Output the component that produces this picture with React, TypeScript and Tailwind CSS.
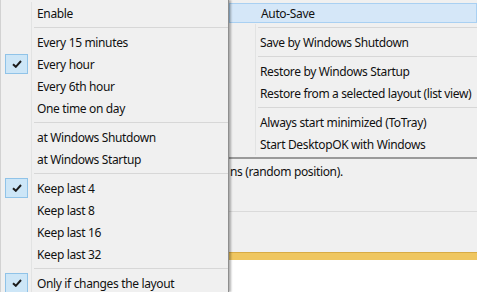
import { FunctionComponent } from "react";

type MenuEntry = { label: string; checked?: boolean; active?: boolean } | "sep";

const subMenu: MenuEntry[] = [
  { label: "Enable" },
  "sep",
  { label: "Every 15 minutes" },
  { label: "Every hour", checked: true },
  { label: "Every 6th hour" },
  { label: "One time on day" },
  "sep",
  { label: "at Windows Shutdown" },
  { label: "at Windows Startup" },
  "sep",
  { label: "Keep last 4", checked: true },
  { label: "Keep last 8" },
  { label: "Keep last 16" },
  { label: "Keep last 32" },
  "sep",
  { label: "Only if changes the layout", checked: true },
];

const parentMenu: MenuEntry[] = [
  { label: "Auto-Save", active: true },
  "sep",
  { label: "Save by Windows Shutdown" },
  "sep",
  { label: "Restore by Windows Startup" },
  { label: "Restore from a selected layout (list view)" },
  "sep",
  { label: "Always start minimized (ToTray)" },
  { label: "Start DesktopOK with Windows" },
];

const CheckBox = () => (
  <div className="ml-[4px] w-[23px] h-[20px] bg-[#cde6f7] border border-[#90c3e8] flex items-center justify-center">
    <svg width="10" height="8" viewBox="0 0 10 8">
      <path d="M1 4.2 L3.8 6.8 L9 1" fill="none" stroke="#1b1b1b" strokeWidth="2" />
    </svg>
  </div>
);

// gutter = width of the icon column incl. its right line, pad = gap before the text
const Menu: FunctionComponent<{ entries: MenuEntry[]; gutter: string; pad: string }> = ({ entries, gutter, pad }) => (
  <div className="pt-[2px] pb-[2px]">
    {entries.map((entry, i) =>
      entry === "sep" ? (
        <div key={i} className="flex h-[7px]">
          <div className={`${gutter} shrink-0 border-r border-[#e2e3e3]`} />
          <div className="flex-1 ml-[2px] pt-[3px]">
            <div className="h-px bg-[#d7d7d7]" />
          </div>
        </div>
      ) : entry.active ? (
        <div key={i} className="flex items-center h-[22px] py-[1px]">
          <div className="flex items-center w-full h-[20px] bg-[#d5e7f8] border border-[#a9d0f2]">
            <div className={`${gutter} shrink-0`} />
            <span className={`${pad} pt-[1px] whitespace-nowrap`}>{entry.label}</span>
          </div>
        </div>
      ) : (
        <div key={i} className="flex h-[22px]">
          <div className={`${gutter} shrink-0 border-r border-[#e2e3e3] flex items-center`}>
            {entry.checked && <CheckBox />}
          </div>
          <span className={`${pad} pt-[1px] flex items-center whitespace-nowrap`}>{entry.label}</span>
        </div>
      )
    )}
  </div>
);

const App: FunctionComponent = () => {
  return (
    <div
      className="w-[477px] h-[292px] overflow-hidden flex bg-[#f0f0f0] text-[12px] leading-[16px] tracking-[-0.35px] text-[#111]"
      style={{ fontFamily: '"Noto Sans", "Open Sans", sans-serif' }}
    >
      {/* sub menu */}
      <div className="relative z-10 w-[229px] shrink-0 h-full bg-[#f0f0f0] border-l border-[#d2d2d2] border-r border-r-[#8e8e8e] shadow-[2px_0_2px_rgba(0,0,0,0.3)]">
        <Menu entries={subMenu} gutter="w-[31px]" pad="pl-[5px]" />
      </div>

      {/* parent menu + window below */}
      <div className="flex-1 min-w-0 flex flex-col">
        <div className="bg-[#f0f0f0] border-b-2 border-[#9a9a9a] overflow-hidden">
          <Menu entries={parentMenu} gutter="w-[27px]" pad="pl-[4px]" />
        </div>
        <div className="flex-1 flex flex-col">
          <div className="h-[53px] pt-[5px] pl-[1px] border-b border-[#dadada] whitespace-nowrap">
            ns (random position).
          </div>
          <div className="h-[40px]" />
          <div className="h-[8px] bg-[#efc660] border-t border-[#d8ab45]" />
          <div className="flex-1 bg-white" />
        </div>
      </div>
    </div>
  );
};

export default App;
